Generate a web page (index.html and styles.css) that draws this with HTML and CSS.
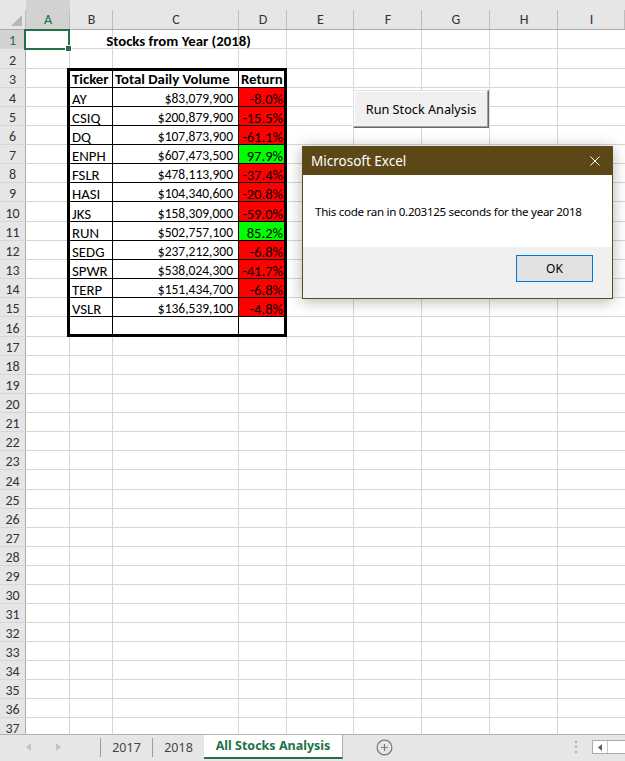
FILE: index.html
```html
<!DOCTYPE html>
<html lang="en">
<head>
<meta charset="utf-8">
<title>All Stocks Analysis</title>
<link rel="stylesheet" href="styles.css">
</head>
<body>
<div class="excel">
  <div class="sheet">
    <div class="layer base">
      <div class="corner"><svg width="26" height="30" viewBox="0 0 26 30"><polygon points="22,15 22,26 11,26" fill="#b7b7b7"/></svg></div>
      <div class="ch sel">A</div>
      <div class="ch">B</div>
      <div class="ch">C</div>
      <div class="ch">D</div>
      <div class="ch">E</div>
      <div class="ch">F</div>
      <div class="ch">G</div>
      <div class="ch">H</div>
      <div class="ch">I</div>
      <div class="row"><span class="rh sel">1</span></div>
      <div class="row"><span class="rh">2</span></div>
      <div class="row"><span class="rh">3</span></div>
      <div class="row"><span class="rh">4</span></div>
      <div class="row"><span class="rh">5</span></div>
      <div class="row"><span class="rh">6</span></div>
      <div class="row"><span class="rh">7</span></div>
      <div class="row"><span class="rh">8</span></div>
      <div class="row"><span class="rh">9</span></div>
      <div class="row"><span class="rh">10</span></div>
      <div class="row"><span class="rh">11</span></div>
      <div class="row"><span class="rh">12</span></div>
      <div class="row"><span class="rh">13</span></div>
      <div class="row"><span class="rh">14</span></div>
      <div class="row"><span class="rh">15</span></div>
      <div class="row"><span class="rh">16</span></div>
      <div class="row"><span class="rh">17</span></div>
      <div class="row"><span class="rh">18</span></div>
      <div class="row"><span class="rh">19</span></div>
      <div class="row"><span class="rh">20</span></div>
      <div class="row"><span class="rh">21</span></div>
      <div class="row"><span class="rh">22</span></div>
      <div class="row"><span class="rh">23</span></div>
      <div class="row"><span class="rh">24</span></div>
      <div class="row"><span class="rh">25</span></div>
      <div class="row"><span class="rh">26</span></div>
      <div class="row"><span class="rh">27</span></div>
      <div class="row"><span class="rh">28</span></div>
      <div class="row"><span class="rh">29</span></div>
      <div class="row"><span class="rh">30</span></div>
      <div class="row"><span class="rh">31</span></div>
      <div class="row"><span class="rh">32</span></div>
      <div class="row"><span class="rh">33</span></div>
      <div class="row"><span class="rh">34</span></div>
      <div class="row"><span class="rh">35</span></div>
      <div class="row"><span class="rh">36</span></div>
      <div class="row"><span class="rh">37</span></div>
    </div>

    <div class="layer overlay">
      <div class="cursor"></div>
      <div class="title">Stocks from Year (2018)</div>
      <div class="tbl">
        <div class="cell hd">Ticker</div><div class="cell hd">Total Daily Volume</div><div class="cell hd">Return</div>
        <div class="cell">AY</div><div class="cell vol">$83,079,900</div><div class="cell ret neg">-8.0%</div>
        <div class="cell">CSIQ</div><div class="cell vol">$200,879,900</div><div class="cell ret neg">-15.5%</div>
        <div class="cell">DQ</div><div class="cell vol">$107,873,900</div><div class="cell ret neg">-61.1%</div>
        <div class="cell">ENPH</div><div class="cell vol">$607,473,500</div><div class="cell ret pos">97.9%</div>
        <div class="cell">FSLR</div><div class="cell vol">$478,113,900</div><div class="cell ret neg">-37.4%</div>
        <div class="cell">HASI</div><div class="cell vol">$104,340,600</div><div class="cell ret neg">-20.8%</div>
        <div class="cell">JKS</div><div class="cell vol">$158,309,000</div><div class="cell ret neg">-59.0%</div>
        <div class="cell">RUN</div><div class="cell vol">$502,757,100</div><div class="cell ret pos">85.2%</div>
        <div class="cell">SEDG</div><div class="cell vol">$237,212,300</div><div class="cell ret neg">-6.8%</div>
        <div class="cell">SPWR</div><div class="cell vol">$538,024,300</div><div class="cell ret neg">-41.7%</div>
        <div class="cell">TERP</div><div class="cell vol">$151,434,700</div><div class="cell ret neg">-6.8%</div>
        <div class="cell">VSLR</div><div class="cell vol">$136,539,100</div><div class="cell ret neg">-4.8%</div>
        <div class="cell"></div><div class="cell"></div><div class="cell"></div>
      </div>
    </div>

    <button class="macro-btn" type="button">Run Stock Analysis</button>

    <div class="dialog">
      <div class="dlg-title">
        <span>Microsoft Excel</span>
        <svg class="dlg-close" width="10" height="10" viewBox="0 0 10 10"><path d="M0.5 0.5L9.5 9.5M9.5 0.5L0.5 9.5" stroke="#fff" stroke-width="1"/></svg>
      </div>
      <div class="dlg-body">This code ran in 0.203125 seconds for the year 2018</div>
      <div class="dlg-foot"><button class="dlg-ok" type="button">OK</button></div>
    </div>
  </div>

  <div class="tabbar">
    <div class="nav">
      <svg width="5" height="8" viewBox="0 0 5 8"><path d="M5 0L0 4L5 8Z" fill="#c2c2c2"/></svg>
      <svg width="5" height="8" viewBox="0 0 5 8"><path d="M0 0L5 4L0 8Z" fill="#c2c2c2"/></svg>
    </div>
    <span class="sep"></span>
    <div class="tab">2017</div>
    <span class="sep"></span>
    <div class="tab">2018</div>
    <div class="tab active">All Stocks Analysis</div>
    <svg class="add" width="17" height="17" viewBox="0 0 17 17"><circle cx="8.5" cy="8.5" r="7.4" fill="none" stroke="#7a7a7a" stroke-width="1.2"/><path d="M8.5 5v7M5 8.5h7" stroke="#7a7a7a" stroke-width="1.2"/></svg>
    <div class="dots"><i></i><i></i><i></i></div>
    <div class="hscroll">
      <span class="hs-btn"><svg width="4" height="7" viewBox="0 0 4 7"><path d="M4 0L0 3.5L4 7Z" fill="#5f5f5f"/></svg></span>
    </div>
  </div>
</div>
</body>
</html>
```

FILE: styles.css
```css
* { box-sizing: border-box; }

html, body {
  margin: 0;
  padding: 0;
}

body {
  width: 625px;
  height: 761px;
  overflow: hidden;
  background: #fff;
  font-family: "Carlito", "Lato", "Liberation Sans", sans-serif;
  color: #000;
}

.excel {
  width: 625px;
  height: 761px;
  display: flex;
  flex-direction: column;
}

/* ---------- sheet ---------- */
.sheet {
  position: relative;
  height: 734px;
  flex: none;
  overflow: hidden;
  display: grid;
  align-items: start;
}

.layer {
  grid-area: 1 / 1;
  display: grid;
  grid-template-columns: 26px 44px 43px 126px 48px 67px 68px 68px 68px 67px;
  grid-template-rows: 30px repeat(3, 19.3px) repeat(12, 19.1px) repeat(2, 19.7px) repeat(20, 19.02px);
}

.corner,
.ch {
  grid-row: 1;
  background-color: #e6e6e6;
  background-image: linear-gradient(#bdbdbd, #bdbdbd);
  background-size: 1px 19px;
  background-position: right bottom;
  background-repeat: no-repeat;
  border-bottom: 1px solid #ababab;
}

.corner { grid-column: 1; }
.corner svg { display: block; }

.ch {
  display: flex;
  align-items: center;
  justify-content: center;
  padding-top: 9px;
  font-size: 14px;
  color: #333;
}

.ch.sel {
  background-color: #d2d2d2;
  color: #217346;
}

.row {
  grid-column: 1 / -1;
  display: flex;
  border-bottom: 1px solid #d6d6d6;
  background-image: linear-gradient(to right,
    #e6e6e6 25px, #ababab 25px 26px,
    transparent 26px 69px, #d6d6d6 69px 70px,
    transparent 70px 112px, #d6d6d6 112px 113px,
    transparent 113px 238px, #d6d6d6 238px 239px,
    transparent 239px 286px, #d6d6d6 286px 287px,
    transparent 287px 353px, #d6d6d6 353px 354px,
    transparent 354px 421px, #d6d6d6 421px 422px,
    transparent 422px 489px, #d6d6d6 489px 490px,
    transparent 490px 557px, #d6d6d6 557px 558px,
    transparent 558px);
}

.rh {
  width: 25px;
  display: flex;
  align-items: flex-end;
  justify-content: center;
  font-size: 14px;
  line-height: 14px;
  color: #333;
}

.rh.sel {
  background: #d2d2d2;
  color: #217346;
}

/* ---------- overlay content ---------- */
.cursor {
  grid-area: 2 / 2 / 3 / 3;
  margin: -1px 0 -1px -2px;
  border: 2px solid #217346;
  position: relative;
}

.cursor::after {
  content: "";
  position: absolute;
  right: -3px;
  bottom: -3px;
  width: 5px;
  height: 5px;
  background: #217346;
  box-shadow: 0 0 0 1px #fff;
}

.title {
  grid-area: 2 / 3 / 3 / 6;
  display: flex;
  align-items: flex-end;
  justify-content: center;
  font-size: 14.8px;
  line-height: 14px;
  padding-bottom: 1px;
  font-weight: 700;
}

.tbl {
  grid-area: 4 / 3 / 18 / 6;
  display: grid;
  grid-template-columns: subgrid;
  grid-template-rows: subgrid;
  position: relative;
}

.tbl::after {
  content: "";
  position: absolute;
  top: -1px;
  left: -3px;
  right: 0;
  bottom: 0;
  border: 3px solid #000;
  pointer-events: none;
}

.cell {
  display: flex;
  align-items: flex-end;
  padding: 0 1px 0 2px;
  background: #fff;
  border-right: 1px solid #000;
  border-bottom: 1px solid #000;
  font-size: 14.8px;
  line-height: 14px;
  white-space: nowrap;
}

.cell.hd {
  font-weight: 700;
  padding-bottom: 1px;
}

.cell.vol {
  justify-content: flex-end;
  padding-right: 5px;
  font-size: 13.5px;
}

.cell.ret {
  justify-content: flex-end;
  padding-right: 3px;
  font-size: 14.6px;
}

.cell.neg { background: #ff0000; }
.cell.pos { background: #00ff00; }

/* ---------- macro button ---------- */
.macro-btn {
  position: absolute;
  left: 353px;
  top: 90px;
  width: 136px;
  height: 38px;
  margin: 0;
  padding: 0 0 1px;
  background: #f0f0f0;
  border: 1px solid;
  border-color: #e3e3e3 #696969 #696969 #e3e3e3;
  box-shadow: inset -1px -1px 0 #a0a0a0, inset 1px 1px 0 #fff;
  font-family: "Noto Sans", "Open Sans", sans-serif;
  font-size: 12.7px;
  color: #000;
}

/* ---------- message box ---------- */
.dialog {
  position: absolute;
  left: 302px;
  top: 146px;
  width: 311px;
  border: 1px solid #5f4a1c;
  background: #fff;
  box-shadow: 0 2px 14px rgba(0, 0, 0, 0.3);
  font-family: "Noto Sans", "Open Sans", sans-serif;
}

.dlg-title {
  height: 28px;
  display: flex;
  align-items: center;
  padding: 0 12px 0 8px;
  background: #5c4716;
  color: #fff;
  font-size: 13.5px;
}

.dlg-close { margin-left: auto; }

.dlg-body {
  height: 72px;
  display: flex;
  align-items: center;
  padding-left: 12px;
  font-size: 11.6px;
  letter-spacing: -0.3px;
  color: #000;
}

.dlg-foot {
  height: 51px;
  display: flex;
  justify-content: flex-end;
  align-items: flex-start;
  padding: 8px 19px 0 0;
  background: #f0f0f0;
}

.dlg-ok {
  width: 77px;
  height: 27px;
  margin: 0;
  padding: 0;
  background: #e1e1e1;
  border: 1px solid #0078d7;
  font-family: inherit;
  font-size: 12px;
  color: #000;
}

/* ---------- sheet tabs ---------- */
.tabbar {
  height: 27px;
  flex: none;
  display: flex;
  align-items: stretch;
  background: #e6e6e6;
  border-top: 1px solid #b3b3b3;
  overflow: hidden;
  font-family: "Noto Sans", "Open Sans", sans-serif;
}

.nav {
  width: 100px;
  display: flex;
  align-items: center;
  gap: 25px;
  padding: 0 0 2px 26px;
}

.nav svg { display: block; }

.sep {
  width: 1px;
  height: 19px;
  margin-top: 3px;
  background: #9c9c9c;
}

.tab {
  width: 51px;
  display: flex;
  align-items: center;
  justify-content: center;
  padding-bottom: 2px;
  font-size: 12.5px;
  color: #444;
}

.tab.active {
  width: 139px;
  margin-top: -1px;
  margin-bottom: 2px;
  padding-bottom: 0;
  background: #fff;
  border-right: 1px solid #ababab;
  border-bottom: 2px solid #217346;
  color: #217346;
  font-weight: 700;
}

.add {
  align-self: center;
  margin: 0 0 2px 33px;
}

.dots {
  align-self: center;
  margin: 0 15px 2px auto;
  display: flex;
  flex-direction: column;
  gap: 3px;
}

.dots i {
  display: block;
  width: 2px;
  height: 2px;
  background: #b0b0b0;
}

.hscroll {
  align-self: center;
  width: 33px;
  height: 14px;
  margin-bottom: 2px;
  display: flex;
  background: #fff;
  border: 1px solid #a9a9a9;
  border-right: none;
}

.hs-btn {
  width: 15px;
  display: flex;
  align-items: center;
  justify-content: center;
  border-right: 1px solid #c8c8c8;
}

.hs-btn svg { display: block; }
```
